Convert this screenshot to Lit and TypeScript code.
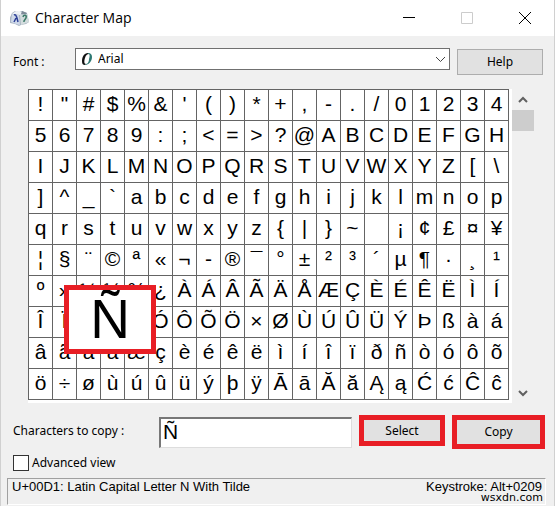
import { LitElement, html, css, svg } from "lit";
import { customElement, state } from "lit/decorators.js";

const COLUMNS = 20;
const ROWS = 10;

/* Printable Latin code points, without the control block 0x7F-0x9F. */
function glyphRows(): string[][] {
  const glyphs: string[] = [];
  for (let code = 0x21; glyphs.length < COLUMNS * ROWS; code++) {
    if (code >= 0x7f && code <= 0x9f) continue;
    glyphs.push(code === 0xad ? "-" : String.fromCharCode(code));
  }
  return Array.from({ length: ROWS }, (_, r) =>
    glyphs.slice(r * COLUMNS, (r + 1) * COLUMNS)
  );
}

const appIcon = svg`
  <svg class="app-icon" viewBox="0 0 20 16" aria-hidden="true">
    <path d="M2 3L5 1l4 1 3-1 5 2 2 9-3 2-5 1-2 1-4-2-5-1-2-1z" fill="#a9b4c2"/>
    <path d="M2 4L6 1l6 1 0 2-2 1z" fill="#edf1f5"/>
    <path d="M2 4l7 1 1 10-4-1-5-2z" fill="#cfd9ea"/>
    <path d="M10 5l7-1 2 8-8 3z" fill="#d3dcdd"/>
    <path d="M11 4l1-3 5 2-1 1z" fill="#7f8b99"/>
    <path d="M4 5c2-1 2 1 3 3l1 4M6 8l-2 4" fill="none" stroke="#2c3f96" stroke-width="1.5"/>
    <path d="M13 7c1-3 4-2 3 1l-2 3v1" fill="none" stroke="#3c7a68" stroke-width="1.5"/>
  </svg>`;

const fontIcon = svg`
  <svg class="font-icon" viewBox="0 0 12 12" aria-hidden="true">
    <path d="M7 0C3 0 1 4 1 8c0 3 1 4 3 4l1-1C3 11 3 8 4 5s2-4 4-4z" fill="#111"/>
    <path d="M7 0c3 0 4 2 4 4 0 4-3 8-7 8l1-1c2 0 3-3 3-5 1-3 1-5-1-5z" fill="#2d7873"/>
  </svg>`;

@customElement("app-root")
export class AppRoot extends LitElement {
  @state() private copyText = "Ñ";
  private rows = glyphRows();

  static styles = css`
    :host {
      display: block;
      font: 12px/20px "Noto Sans", "Open Sans", sans-serif;
      color: #000;
    }
    * { box-sizing: border-box; }
    .window {
      position: relative;
      background: #f0f0f0;
      border: 1px solid #d0d0d0;
      border-top: 0;
    }
    .titlebar {
      display: flex;
      align-items: center;
      height: 36px;
      padding-left: 9px;
      background: #fff;
    }
    .app-icon { width: 20px; height: 16px; }
    h1 {
      flex: 1;
      margin: 0 0 0 5px;
      font: 14px/20px "Open Sans", "Noto Sans", sans-serif;
    }
    .caption {
      display: grid;
      place-items: center;
      width: 58px;
      height: 34px;
      padding: 0;
      border: 0;
      background: none;
    }
    .caption svg { width: 14px; height: 14px; fill: none; stroke: #000; }
    .caption:disabled svg { stroke: #ccc; }
    .fontbar {
      display: flex;
      align-items: flex-start;
      gap: 7px;
      padding: 12px 11px 0 12px;
    }
    .fontbar label { width: 55px; padding-top: 4px; }
    .picker { position: relative; flex: 1; display: flex; }
    .font-icon { position: absolute; left: 6px; top: 5px; width: 12px; height: 12px; }
    .picker .chevron {
      position: absolute;
      right: 4px;
      top: 8px;
      width: 11px;
      height: 7px;
      pointer-events: none;
    }
    .chevron { fill: none; stroke: #444; }
    select {
      appearance: none;
      width: 100%;
      height: 22px;
      padding: 0 20px 0 22px;
      border: 1px solid #707070;
      border-radius: 0;
      background: #fff;
      color: #000;
      font: inherit;
    }
    .push {
      height: 26px;
      padding: 0;
      border: 1px solid #adadad;
      background: #e1e1e1;
      color: #000;
      font: inherit;
    }
    .help { width: 86px; margin-top: 1px; }
    .map {
      position: relative;
      display: flex;
      margin: 14px 20px 0 27px;
    }
    .sheet {
      flex: 1;
      border: solid #fff;
      border-width: 0 3px 3px 0;
    }
    table {
      width: 100%;
      table-layout: fixed;
      border-collapse: collapse;
      background: #fff;
    }
    td {
      height: 31px;
      padding: 0 0 2px;
      border: 1px solid #646464;
      font: 21px/24px "Liberation Sans", Arial, sans-serif;
      text-align: center;
      white-space: nowrap;
    }
    .callout {
      position: absolute;
      left: 36px;
      top: 196px;
      width: 92px;
      height: 69px;
      overflow: hidden;
      border: 5px solid #e81e25;
      background: #fff;
      font: 55px/58px "Liberation Sans", Arial, sans-serif;
      text-align: center;
    }
    .scroll {
      display: flex;
      flex-direction: column;
      align-items: center;
      width: 22px;
    }
    .scroll button {
      display: grid;
      place-items: center;
      width: 22px;
      height: 21px;
      padding: 0;
      border: 0;
      background: none;
    }
    .scroll svg { width: 12px; height: 8px; fill: none; stroke: #606060; stroke-width: 2; }
    .thumb { width: 22px; height: 21px; background: #cdcdcd; }
    .track { flex: 1; }
    .copybar {
      display: flex;
      align-items: flex-start;
      gap: 7px;
      padding: 12px 9px 0 12px;
    }
    .copybar label { width: 139px; padding-top: 6px; }
    .copybar input {
      flex: 1;
      min-width: 0;
      height: 31px;
      margin-top: 2px;
      padding: 0 2px 2px;
      border: solid;
      border-width: 2px 1px 1px 2px;
      border-color: #777 #ddd #ddd #777;
      border-radius: 0;
      background: #fff;
      font: 21px/26px "Liberation Sans", Arial, sans-serif;
    }
    .marked { border: 5px solid #e81e25; }
    .select { width: 86px; height: 31px; }
    .copy { width: 93px; height: 34px; }
    .advanced {
      display: flex;
      align-items: center;
      gap: 3px;
      margin: 4px 12px 0;
    }
    .advanced input {
      appearance: none;
      width: 16px;
      height: 16px;
      margin: 0;
      border: 1px solid #333;
      background: #fff;
    }
    .advanced input:checked { background: #333; }
    .status {
      display: flex;
      justify-content: space-between;
      height: 27px;
      margin: 5px 8px 2px 6px;
      padding: 0 3px 0 4px;
      border: solid;
      border-width: 1px;
      border-color: #a0a0a0 #fff #fff #a0a0a0;
      font: 13px/16px "Liberation Sans", Arial, sans-serif;
    }
    .site {
      position: absolute;
      right: 11px;
      bottom: 2px;
      font: 11px/14px "DejaVu Sans", sans-serif;
    }
  `;

  render() {
    return html`
      <main class="window">
        <header class="titlebar">
          ${appIcon}
          <h1>Character Map</h1>
          <button class="caption" aria-label="Minimize">
            <svg viewBox="0 0 14 14"><path d="M1 6.5h12" /></svg>
          </button>
          <button class="caption" aria-label="Maximize" disabled>
            <svg viewBox="0 0 14 14"><path d="M1.5 1.5h11v11h-11z" /></svg>
          </button>
          <button class="caption" aria-label="Close">
            <svg viewBox="0 0 14 14"><path d="M1 1l12 12M13 1L1 13" /></svg>
          </button>
        </header>

        <section class="fontbar">
          <label for="font">Font :</label>
          <div class="picker">
            <select id="font"><option>Arial</option></select>
            ${fontIcon}
            <svg class="chevron" viewBox="0 0 11 7"><path d="M1 1l4.500 4.500L10 1" /></svg>
          </div>
          <button class="push help">Help</button>
        </section>

        <section class="map">
          <div class="sheet">
            <table>
              <tbody>
                ${this.rows.map(
                  (row) => html`<tr>${row.map((glyph) => html`<td>${glyph}</td>`)}</tr>`
                )}
              </tbody>
            </table>
          </div>
          <div class="scroll">
            <button aria-label="Scroll up">
              <svg viewBox="0 0 12 8"><path d="M2 6l4-4 4 4" /></svg>
            </button>
            <div class="thumb"></div>
            <div class="track"></div>
            <button aria-label="Scroll down">
              <svg viewBox="0 0 12 8"><path d="M2 2l4 4 4-4" /></svg>
            </button>
          </div>
          <div class="callout">Ñ</div>
        </section>

        <section class="copybar">
          <label for="copy">Characters to copy :</label>
          <input
            id="copy"
            type="text"
            .value=${this.copyText}
            @input=${(e: Event) => (this.copyText = (e.target as HTMLInputElement).value)}
          />
          <button class="push marked select">Select</button>
          <button class="push marked copy">Copy</button>
        </section>

        <div class="advanced">
          <input id="advanced" type="checkbox" />
          <label for="advanced">Advanced view</label>
        </div>

        <footer class="status">
          <span>U+00D1: Latin Capital Letter N With Tilde</span>
          <span>Keystroke: Alt+0209</span>
        </footer>
        <div class="site">wsxdn.com</div>
      </main>
    `;
  }
}
